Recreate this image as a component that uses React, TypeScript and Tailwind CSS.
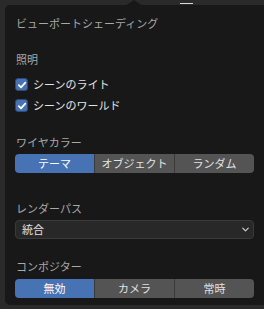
import React from "react";
import { ChevronDown } from "lucide-react";

const font = { fontFamily: '"Noto Sans CJK JP", "Noto Sans", sans-serif' };

const Check = () => (
  <div className="w-[13px] h-[13px] rounded-[3px] bg-[#4772b3] border border-[#2c4a78] flex items-center justify-center">
    <svg width="10" height="10" viewBox="0 0 10 10">
      <path d="M1.8 5.2 L4 7.4 L8.3 2.6" fill="none" stroke="#ffffff" strokeWidth="1.7" strokeLinecap="round" strokeLinejoin="round" />
    </svg>
  </div>
);

const Segmented = ({ items, active }: { items: string[]; active: number }) => (
  <div className="flex h-[19px] mx-[10px] rounded-[4px] overflow-hidden">
    {items.map((t, i) => (
      <div
        key={t}
        className={`flex-1 flex items-center justify-center text-[11px] leading-none ${
          i === active ? "bg-[#4772b3] text-white" : "bg-[#545454] text-[#e2e2e2]"
        } ${i > 0 ? "border-l border-[#3a3a3a]" : ""}`}
      >
        {t}
      </div>
    ))}
  </div>
);

export default function App() {
  return (
    <div className="relative w-[264px] h-[309px] bg-[#2a2a2a] pt-[5px] pl-[5px] overflow-hidden" style={font}>
      <div className="absolute left-[125px] top-0 w-0 h-0 border-l-[9px] border-r-[9px] border-b-[6px] border-l-transparent border-r-transparent border-b-[#181818]" />
      <div className="absolute left-[180px] top-[3px] w-[13px] h-px bg-[#d8d8d8]" />
      <div className="h-[300px] bg-[#181818] rounded-l-[5px] pt-[10px] flex flex-col">
        <div className="h-4 flex items-center pl-[11px] text-[11px] text-[#a8a8a8]">ビューポートシェーディング</div>

        <div className="mt-5 h-4 flex items-center pl-[11px] text-[11px] text-[#a8a8a8]">照明</div>
        <div className="mt-[7px] h-[21px] flex items-center gap-[5px] pl-[10px] text-[11px] text-[#e4e4e4]">
          <Check />
          <span>シーンのライト</span>
        </div>
        <div className="h-[21px] flex items-center gap-[5px] pl-[10px] text-[11px] text-[#e4e4e4]">
          <Check />
          <span>シーンのワールド</span>
        </div>

        <div className="mt-[18px] h-4 flex items-center pl-[11px] text-[11px] text-[#a8a8a8]">ワイヤカラー</div>
        <div className="mt-1">
          <Segmented items={["テーマ", "オブジェクト", "ランダム"]} active={0} />
        </div>

        <div className="mt-[27px] h-4 flex items-center pl-[11px] text-[11px] text-[#a8a8a8]">レンダーパス</div>
        <div className="mt-1 mx-[10px] h-[19px] rounded-[4px] bg-[#282828] border border-[#3a3a3a] flex items-center justify-between pl-[6px] pr-[2px] text-[11px] text-[#e2e2e2]">
          <span>統合</span>
          <ChevronDown size={11} strokeWidth={2.5} className="text-[#d0d0d0]" />
        </div>

        <div className="mt-[19px] h-4 flex items-center pl-[11px] text-[11px] text-[#a8a8a8]">コンポジター</div>
        <div className="mt-[5px]">
          <Segmented items={["無効", "カメラ", "常時"]} active={0} />
        </div>
      </div>
    </div>
  );
}
